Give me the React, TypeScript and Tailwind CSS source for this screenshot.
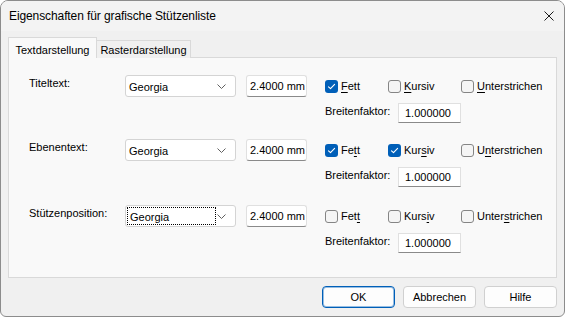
import React from 'react'

type Flags = { fett: boolean; kursiv: boolean; unter: boolean }

function Mn({ text, at }: { text: string; at: number }) {
  return (
    <span>
      {text.slice(0, at)}
      <span className="underline underline-offset-2">{text[at]}</span>
      {text.slice(at + 1)}
    </span>
  )
}

function CheckBox({ checked }: { checked: boolean }) {
  if (checked) {
    return (
      <span className="flex h-[13px] w-[13px] items-center justify-center rounded-[3px] bg-[#005fb8]">
        <svg width="9" height="9" viewBox="0 0 9 9" fill="none">
          <path d="M1.5 4.8 L3.5 6.7 L7.6 2.4" stroke="white" strokeWidth="1.1" strokeLinecap="round" strokeLinejoin="round" />
        </svg>
      </span>
    )
  }
  return <span className="h-[13px] w-[13px] rounded-[3px] border border-[#858585] bg-[#f5f5f5]" />
}

function Check({ checked, label, at, width }: { checked: boolean; label: string; at: number; width: string }) {
  return (
    <div className={`flex items-center gap-[3px] ${width}`}>
      <CheckBox checked={checked} />
      <Mn text={label} at={at} />
    </div>
  )
}

function Combo({ focus }: { focus?: boolean }) {
  return (
    <div className="flex h-[22px] w-[111px] items-center rounded-[3px] border border-[#d4d4d4] bg-white pl-[1px] pr-[9px]">
      <div className={`flex h-[18px] w-[89px] items-center pl-[2px] pt-[2px] ${focus ? 'border border-dotted border-black pl-[1px]' : ''}`}>
        Georgia
      </div>
      <svg className="ml-auto" width="9" height="5" viewBox="0 0 9 5" fill="none">
        <path d="M0.5 0.5 L4.5 4.5 L8.5 0.5" stroke="#606060" strokeWidth="1" />
      </svg>
    </div>
  )
}

function Row({ label, flags, keys }: { label: string; flags: Flags; keys: [number, number, number] }) {
  return (
    <div className="flex">
      <div className="w-[96px] pt-[2px] leading-[13px]">{label}</div>
      <Combo focus={label === 'Stützenposition:'} />
      <div className="ml-[10px] flex h-[22px] w-[61px] items-center justify-center whitespace-nowrap rounded-[3px] border border-[#e0e0e0] border-b-[#8a8a8a] bg-white pl-[2px] pt-[1px]">
        2.4000 mm
      </div>
      <div className="ml-[18px] flex flex-col">
        <div className="flex h-[22px] items-center">
          <Check checked={flags.fett} label="Fett" at={keys[0]} width="w-[63px]" />
          <Check checked={flags.kursiv} label="Kursiv" at={keys[1]} width="w-[73px]" />
          <Check checked={flags.unter} label="Unterstrichen" at={keys[2]} width="w-auto" />
        </div>
        <div className="mt-[6px] flex items-center">
          <span className="-mt-[3px] w-[73px]">Breitenfaktor:</span>
          <div className="flex h-[20px] w-[63px] items-center border border-[#e0e0e0] border-b-[#8a8a8a] bg-white pl-[6px] pt-[1px]">
            1.000000
          </div>
        </div>
      </div>
    </div>
  )
}

function Btn({ label, primary }: { label: string; primary?: boolean }) {
  return (
    <div
      className={`flex h-[22px] w-[73px] items-center justify-center rounded-[4px] bg-[#fdfdfd] ${
        primary ? 'border border-[#005fb8] ring-1 ring-inset ring-[#005fb8]/40' : 'border border-[#d0d0d0]'
      }`}
    >
      {label}
    </div>
  )
}

export default function App() {
  return (
    <div className="h-[317px] w-[565px] overflow-hidden rounded-t-[8px] rounded-b-[6px] border border-[#8c8c8c] bg-[#f0f0f0] font-['Liberation_Sans',Arial,sans-serif] text-[11px] text-black">
      <div className="flex h-[30px] items-center justify-between bg-[#f3f3f3] pl-[8px] pr-[10px]">
        <span className="text-[12px] tracking-[-0.1px]">Eigenschaften für grafische Stützenliste</span>
        <svg width="10" height="10" viewBox="0 0 10 10" fill="none">
          <path d="M0.5 0.5 L9.5 9.5 M9.5 0.5 L0.5 9.5" stroke="#1a1a1a" strokeWidth="1" />
        </svg>
      </div>

      <div className="px-[7px] pt-[6px]">
        <div className="flex h-[21px] items-end">
          <div className="relative z-10 flex h-[21px] w-[89px] items-start justify-center border border-b-0 border-[#d9d9d9] bg-[#f9f9f9] pt-[4px]">
            Textdarstellung
          </div>
          <div className="flex h-[18px] w-[94px] items-center justify-center border border-b-0 border-l-0 border-[#d9d9d9] bg-[#f0f0f0] pt-[1px]">
            Rasterdarstellung
          </div>
        </div>
        <div className="-mt-px h-[221px] border border-[#d9d9d9] bg-[#f9f9f9] pl-[20px] pt-[17px]">
          <Row label="Titeltext:" flags={{ fett: true, kursiv: false, unter: false }} keys={[0, 0, 0]} />
          <div className="h-[16px]" />
          <Row label="Ebenentext:" flags={{ fett: true, kursiv: true, unter: false }} keys={[2, 3, 1]} />
          <div className="h-[18px]" />
          <Row label="Stützenposition:" flags={{ fett: false, kursiv: false, unter: false }} keys={[3, 4, 5]} />
        </div>

        <div className="mt-[8px] flex justify-end gap-[8px]">
          <Btn label="OK" primary />
          <Btn label="Abbrechen" />
          <Btn label="Hilfe" />
        </div>
      </div>
    </div>
  )
}
